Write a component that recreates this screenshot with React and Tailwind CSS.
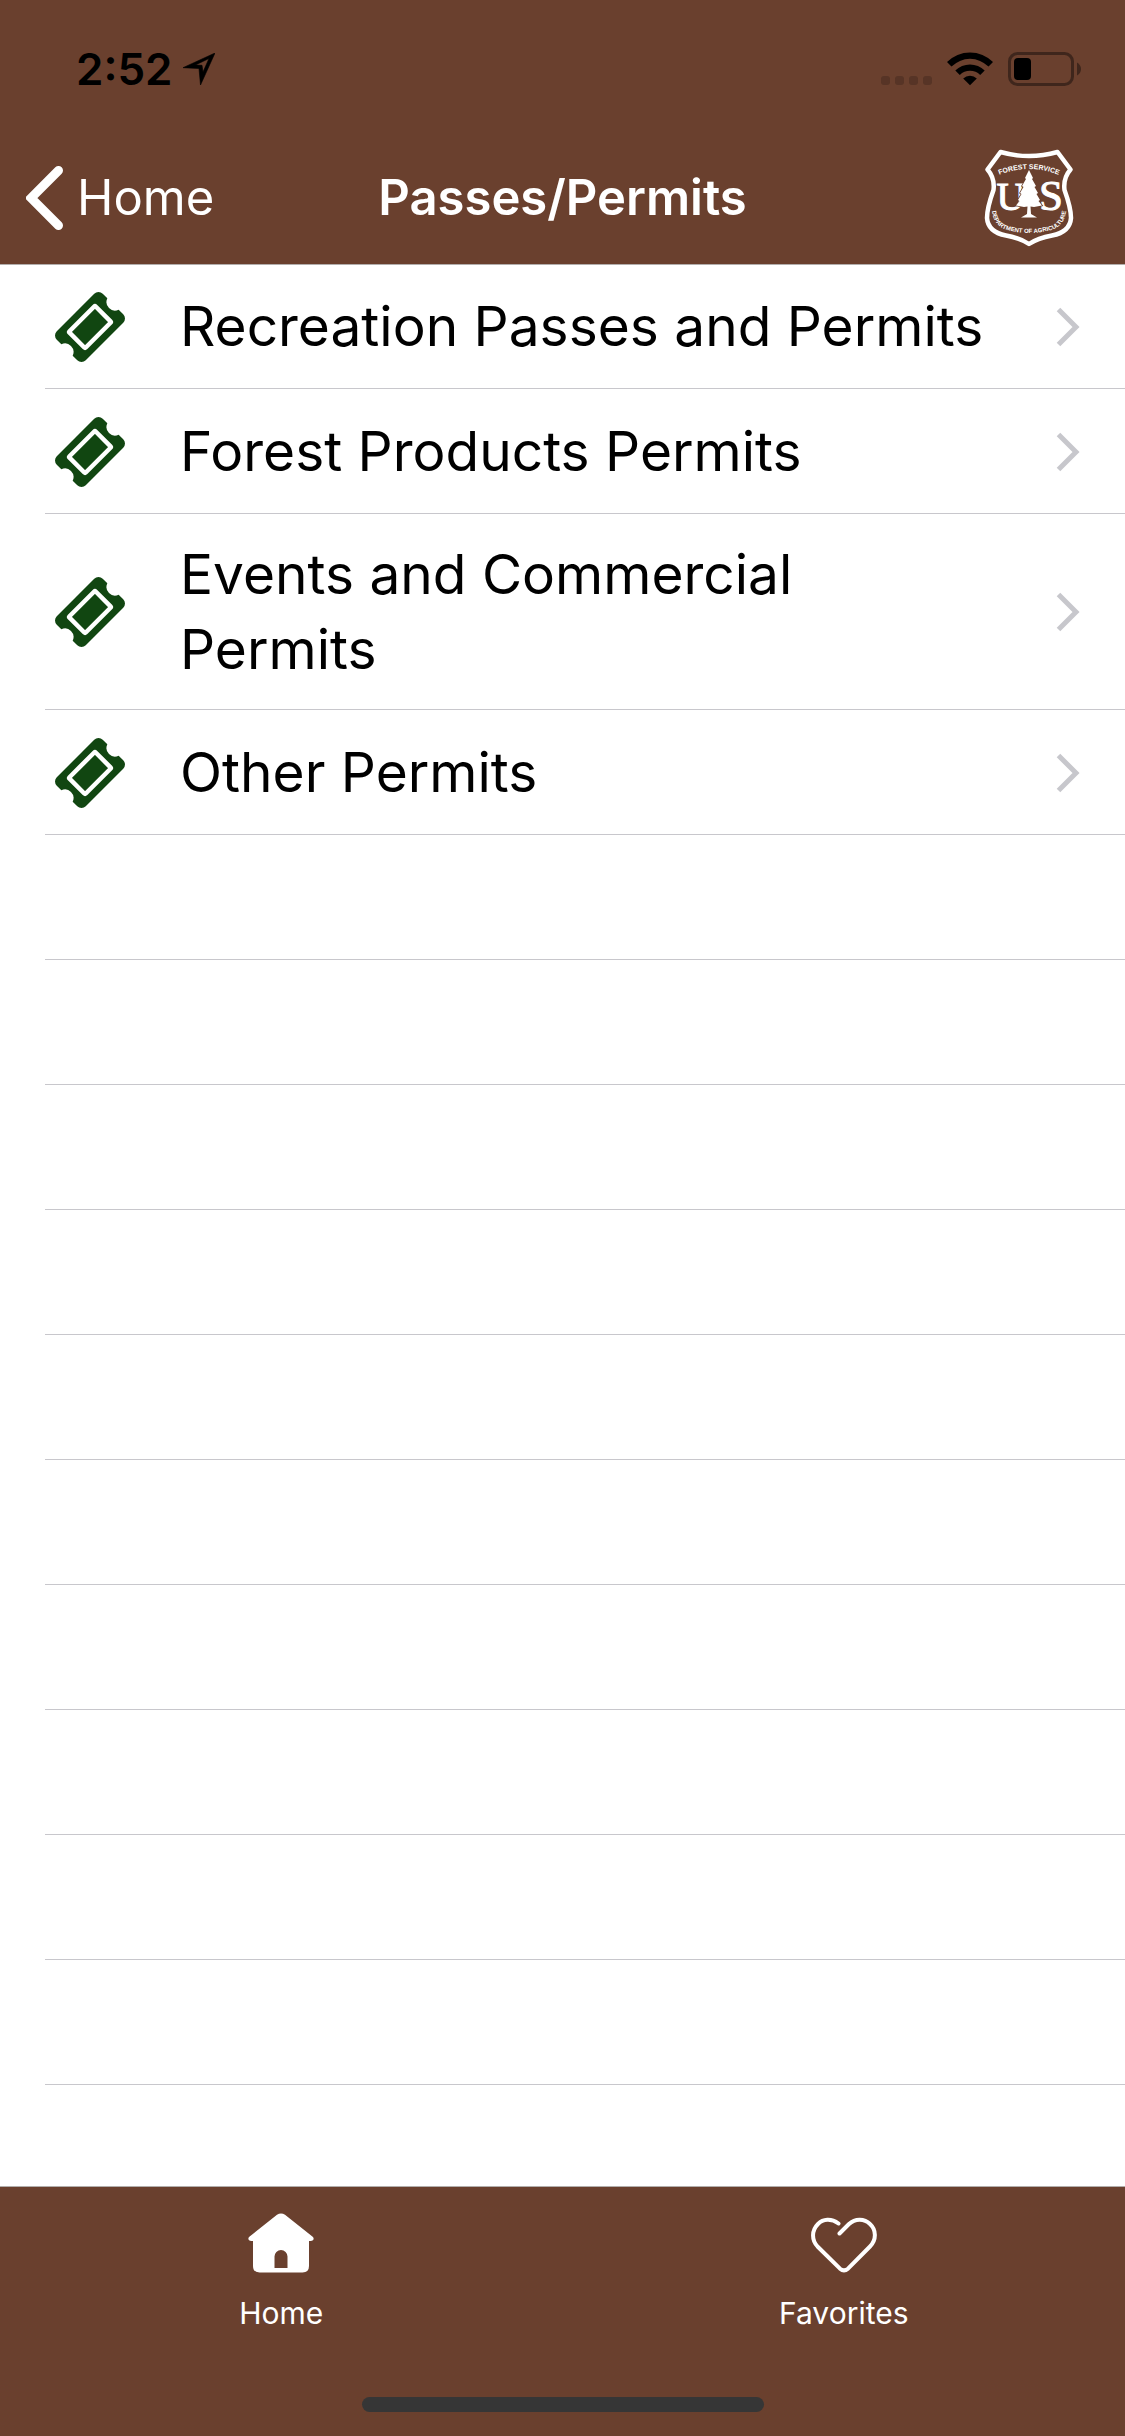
import React from "react";

const items = [
  "Recreation Passes and Permits",
  "Forest Products Permits",
  "Events and Commercial Permits",
  "Other Permits",
];

const emptyRows = Array.from({ length: 10 }, (_, i) => i);

function LocationArrow() {
  return (
    <svg width="32" height="32" viewBox="0 0 32 32" aria-hidden="true">
      <path
        fillRule="evenodd"
        d="M32 0 L17.5 32 L16 15.500 L0 14.7 Z M26 5.500 L12.500 12 L19 12.3 L20 19 Z"
        fill="#000"
        stroke="#000"
        strokeWidth="0.600"
      />
    </svg>
  );
}

function Wifi() {
  return (
    <svg width="46" height="34" viewBox="0 0 46 34" aria-hidden="true">
      <path d="M0 10 A32.5 32.5 0 0 1 46 10 L41.5 14.6 A26 26 0 0 0 4.5 14.6 Z" />
      <path d="M8.3 18.4 A21 21 0 0 1 37.700 18.400 L33.200 22.900 A14.600 14.600 0 0 0 12.800 22.900 Z" />
      <path d="M16.200 26.400 A9.800 9.800 0 0 1 29.800 26.400 L23 33.300 Z" />
    </svg>
  );
}

function Battery() {
  return (
    <svg width="74" height="34" viewBox="0 0 74 34" aria-hidden="true">
      <rect x="1.5" y="1.5" width="63" height="31" rx="8" fill="none" stroke="#3f261c" strokeWidth="3" />
      <rect x="6" y="6" width="17" height="22" rx="4" />
      <path d="M69 10.500 Q73 13 73 17 Q73 21 69 23.500 Z" fill="#3f261c" />
    </svg>
  );
}

function Shield() {
  return (
    <svg width="90" height="98" viewBox="0 0 90 98" role="img" aria-label="Forest Service, Department of Agriculture">
      <path
        d="M16.500 3 Q45 11 73.500 3 L86.500 20.500 Q79 29 80.500 41 Q87 59 87 69 Q86 83 68 86.500 Q54 89 45 95 Q36 89 22 86.500 Q4 83 3 69 Q3 59 9.500 41 Q11 29 3.500 20.500 Z"
        fill="none"
        stroke="#fff"
        strokeWidth="4.500"
        strokeLinejoin="round"
      />
      <defs>
        <path id="shield-top" d="M10 28 Q45 12 80 28" />
        <path id="shield-bottom" d="M8 54 Q6 77 25 81.500 Q45 86.500 65 81.500 Q84 77 82 54" />
      </defs>
      <g fill="#fff" fontFamily="'Liberation Sans Narrow', 'Liberation Sans', sans-serif" fontWeight="700">
        <text fontSize="7" textAnchor="middle">
          <textPath href="#shield-top" startOffset="50%">FOREST SERVICE</textPath>
        </text>
        <text fontSize="6" textAnchor="middle">
          <textPath href="#shield-bottom" startOffset="50%">DEPARTMENT OF AGRICULTURE</textPath>
        </text>
      </g>
      <g fill="#fff" stroke="#fff" strokeWidth="1" fontFamily="'Liberation Serif', serif" textAnchor="middle">
        <text x="27" y="61" fontSize="40">U</text>
        <text x="67" y="61" fontSize="43">S</text>
      </g>
      <path
        d="M45 21 L49 29 L48 30 L52 37 L50.500 38 L54 44 L52.500 45 L56 51 L54.500 52 L58 56.500 L50 58 L46.500 57.500 L47 65 L53 68.500 L37 68.500 L43 65 L43.500 57.500 L40 58 L32 56.500 L35.500 52 L34 51 L37.500 45 L36 44 L39.500 38 L38 37 L42 30 L41 29 Z"
        fill="#fff"
        stroke="#6a402e"
        strokeWidth="1.500"
        paintOrder="stroke"
      />
    </svg>
  );
}

function Ticket() {
  return (
    <svg width="72" height="72" viewBox="-36 -36 72 72" className="shrink-0" aria-hidden="true">
      <g transform="rotate(-45)">
        <path
          d="M-26.500 -20.500 H26.500 A6 6 0 0 1 32.500 -14.500 V-8 A8.500 8.500 0 0 0 32.500 8 V14.500 A6 6 0 0 1 26.500 20.500 H-26.500 A6 6 0 0 1 -32.500 14.500 V8 A8.500 8.500 0 0 0 -32.500 -8 V-14.500 A6 6 0 0 1 -26.500 -20.500 Z"
          fill="#114611"
        />
        <rect x="-18.500" y="-11.500" width="37" height="23" rx="1" fill="none" stroke="#fff" strokeWidth="4.500" />
      </g>
    </svg>
  );
}

function Chevron() {
  return (
    <svg width="24" height="40" viewBox="0 0 24 40" className="shrink-0" aria-hidden="true">
      <path d="M2.500 2.500 L20 20 L2.500 37.500" fill="none" stroke="#c7c7cc" strokeWidth="5" />
    </svg>
  );
}

function HomeIcon() {
  return (
    <svg width="66" height="60" viewBox="0 0 66 60" aria-hidden="true">
      <path
        fillRule="evenodd"
        d="M29 1.800 Q33 -1 37 1.800 L65 24 Q67 27.500 63 28 H61 V53 Q61 59.500 54.500 59.500 H11.500 Q5 59.500 5 53 V28 H3 Q-1 27.500 1 24 Z M26.500 55 H39.500 V43.500 A6.500 6.500 0 0 0 26.500 43.500 Z"
        fill="#fff"
      />
    </svg>
  );
}

function HeartIcon() {
  return (
    <svg width="66" height="60" viewBox="0 0 66 60" aria-hidden="true">
      <path
        d="M27.500 10.500 C20 5 12 6 7 11 C0.500 17.500 0.500 27 6.500 33.500 L29 55.700 Q33 59 37 55.700 L59 33.500 C65.500 27 65.500 17 59 11 C53 5 44 5.500 38 11 L28.500 20.500"
        fill="none"
        stroke="#fff"
        strokeWidth="4"
        strokeLinecap="round"
        strokeLinejoin="round"
      />
    </svg>
  );
}

export default function App() {
  return (
    <div className="flex min-h-screen flex-col bg-white font-['Inter',sans-serif] text-black">
      <header className="relative bg-[#6a402e] shadow-[0_1px_0_#b2aeac]">
        <div className="flex h-[132px] items-center justify-between pr-[43px] pl-[76px] pt-[6px]">
          <div className="flex items-center gap-[10px]">
            <time className="text-[44px] leading-[56px] font-semibold">2:52</time>
            <LocationArrow />
          </div>
          <div className="flex items-center">
            <div className="mt-[22px] mr-[15px] flex gap-[5px]">
              <span className="size-[9px] rounded-[3px] bg-[#573426]" />
              <span className="size-[9px] rounded-[3px] bg-[#573426]" />
              <span className="size-[9px] rounded-[3px] bg-[#573426]" />
              <span className="size-[9px] rounded-[3px] bg-[#573426]" />
            </div>
            <Wifi />
            <div className="ml-[15px]">
              <Battery />
            </div>
          </div>
        </div>
        <nav className="grid h-[132px] grid-cols-[1fr_auto_1fr] items-center px-[26px] text-white">
          <a href="#home" className="flex items-center gap-[13px] text-[49px] leading-[60px]">
            <svg width="38" height="64" viewBox="0 0 38 64" aria-hidden="true">
              <path d="M32.500 4.500 L5 32 L32.500 59.500" fill="none" stroke="#fff" strokeWidth="9" strokeLinecap="round" />
            </svg>
            Home
          </a>
          <h1 className="text-[49px] leading-[60px] font-semibold">Passes/Permits</h1>
          <div className="flex justify-end pr-[25px]">
            <Shield />
          </div>
        </nav>
      </header>

      <main className="flex-1">
        <ul className="pl-[45px]">
          {items.map((label) => (
            <li key={label} className="border-b border-[#c8c7cc]">
              <a href="#permits" className="flex min-h-[124px] items-center pt-[23px] pr-[45px] pb-[22px] pl-[9px]">
                <Ticket />
                <span className="mr-[60px] ml-[54px] flex-1 text-[55px] leading-[75px]">{label}</span>
                <Chevron />
              </a>
            </li>
          ))}
          {emptyRows.map((i) => (
            <li key={i} className="h-[125px] border-b border-[#c8c7cc]" />
          ))}
        </ul>
      </main>

      <footer className="border-t border-[#b2aeac] bg-[#6a402e] text-white">
        <nav className="grid grid-cols-2 text-[30px] leading-[36px]">
          <a href="#home" className="flex flex-col items-center gap-[22px] pt-[26px]">
            <HomeIcon />
            Home
          </a>
          <a href="#favorites" className="flex flex-col items-center gap-[22px] pt-[26px]">
            <HeartIcon />
            Favorites
          </a>
        </nav>
        <div className="mx-auto mt-[66px] mb-[24px] h-[15px] w-[402px] rounded-full bg-[#363636]" />
      </footer>
    </div>
  );
}
